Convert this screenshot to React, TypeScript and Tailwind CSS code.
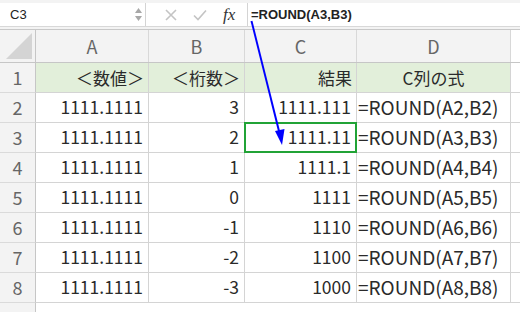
import React from 'react'

const cols = [113, 96, 112, 154]
const rows: [string, string, string, string][] = [
  ['1111.1111', '3', '1111.111', '=ROUND(A2,B2)'],
  ['1111.1111', '2', '1111.11', '=ROUND(A3,B3)'],
  ['1111.1111', '1', '1111.1', '=ROUND(A4,B4)'],
  ['1111.1111', '0', '1111', '=ROUND(A5,B5)'],
  ['1111.1111', '-1', '1110', '=ROUND(A6,B6)'],
  ['1111.1111', '-2', '1100', '=ROUND(A7,B7)'],
  ['1111.1111', '-3', '1000', '=ROUND(A8,B8)'],
]

const jp = { fontFamily: '"Noto Sans CJK JP", "Noto Sans", sans-serif' }

function RowHead({ n }: { n: string }) {
  return (
    <div className="w-[36px] h-[30px] shrink-0 flex items-center justify-center bg-[#f3f3f3] border-r border-b border-r-[#c6c6c6] border-b-[#dadada] text-[18px] text-[#666]">
      {n}
    </div>
  )
}

export default function App() {
  return (
    <div className="relative w-[520px] h-[312px] overflow-hidden bg-white" style={jp}>
      {/* formula bar */}
      <div className="h-[30px] bg-[#f3f3f3] pt-[3px] border-b border-[#c8c8c8]">
        <div className="flex h-[24px] bg-white border-b border-[#d8d8d8]">
          <div className="w-[146px] flex items-center justify-between pl-[10px] pr-[3px] border-r border-[#d4d4d4]">
            <span className="text-[13px] text-[#222]" style={{ fontFamily: '"Liberation Sans", sans-serif' }}>C3</span>
            <div className="flex flex-col items-center gap-[3px] text-[#a8a8a8]">
              <svg width="7" height="5" viewBox="0 0 7 5"><path d="M0 5L3.5 0L7 5Z" fill="currentColor" /></svg>
              <svg width="7" height="5" viewBox="0 0 7 5"><path d="M0 0L3.5 5L7 0Z" fill="currentColor" /></svg>
            </div>
          </div>
          <div className="w-[102px] flex items-center pl-[19px] border-r border-[#d4d4d4]">
            <svg width="12" height="12" viewBox="0 0 12 12" className="text-[#c4c4c4]">
              <path d="M1 1L11 11M11 1L1 11" stroke="currentColor" strokeWidth="1.6" />
            </svg>
            <svg width="14" height="12" viewBox="0 0 14 12" className="ml-[16px] text-[#c4c4c4]">
              <path d="M1 6.5L5 10.5L13 1.5" stroke="currentColor" strokeWidth="1.6" fill="none" />
            </svg>
            <span className="ml-[16px] text-[17px] italic text-[#333]" style={{ fontFamily: '"Liberation Serif", serif' }}>fx</span>
          </div>
          <div className="flex items-center pl-[3px] text-[13px] font-bold text-[#222]" style={{ fontFamily: '"Liberation Sans", sans-serif' }}>
            =ROUND(A3,B3)
          </div>
        </div>
      </div>

      {/* column header */}
      <div className="flex h-[33px] bg-[#f3f3f3] border-b border-[#c6c6c6]">
        <div className="w-[36px] shrink-0 border-r border-[#c6c6c6] flex items-end justify-end p-[3px]">
          <svg width="26" height="26" viewBox="0 0 26 26"><path d="M26 0V26H0Z" fill="#d4d4d4" /></svg>
        </div>
        {['A', 'B', 'C', 'D'].map((c, i) => (
          <div key={c} style={{ width: cols[i] }} className="shrink-0 flex items-center justify-center border-r border-[#d8d8d8] text-[18px] text-[#666]">
            {c}
          </div>
        ))}
        <div className="flex-1 bg-white" />
      </div>

      {/* row 1 */}
      <div className="flex">
        <RowHead n="1" />
        {['＜数値＞', '＜桁数＞', '結果', 'C列の式'].map((t, i) => (
          <div key={i} style={{ width: cols[i] }} className={`shrink-0 h-[30px] flex items-center bg-[#e2efda] border-r border-b border-[#d4d4d4] text-[17px] text-[#2a2a2a] ${i === 3 ? 'justify-center' : 'justify-end pr-[4px]'}`}>
            {t}
          </div>
        ))}
        <div className="flex-1 border-b border-[#d4d4d4]" />
      </div>

      {rows.map((r, ri) => (
        <div key={ri} className="flex">
          <RowHead n={String(ri + 2)} />
          {r.map((t, i) => (
            <div key={i} style={{ width: cols[i] }} className={`relative shrink-0 h-[30px] flex items-center border-r border-b border-[#d4d4d4] text-[#2a2a2a] ${i === 3 ? 'justify-start pl-[1px] text-[19px]' : 'justify-end pr-[5px] text-[17.5px]'}`}>
              {t}
              {ri === 1 && i === 2 && <div className="absolute left-[-1px] top-[-1px] right-[-1px] bottom-[-1px] border-2 border-[#21a336]" />}
            </div>
          ))}
          <div className="flex-1 border-b border-[#d4d4d4]" />
        </div>
      ))}

      <div className="flex">
        <RowHead n="9" />
      </div>

      {/* arrow */}
      <svg className="absolute left-0 top-0 pointer-events-none" width="520" height="312">
        <line x1="251.5" y1="21" x2="279.5" y2="133" stroke="#0000ff" strokeWidth="2" />
        <path d="M282 145L275 131L284.5 129Z" fill="#0000ff" />
      </svg>
    </div>
  )
}
